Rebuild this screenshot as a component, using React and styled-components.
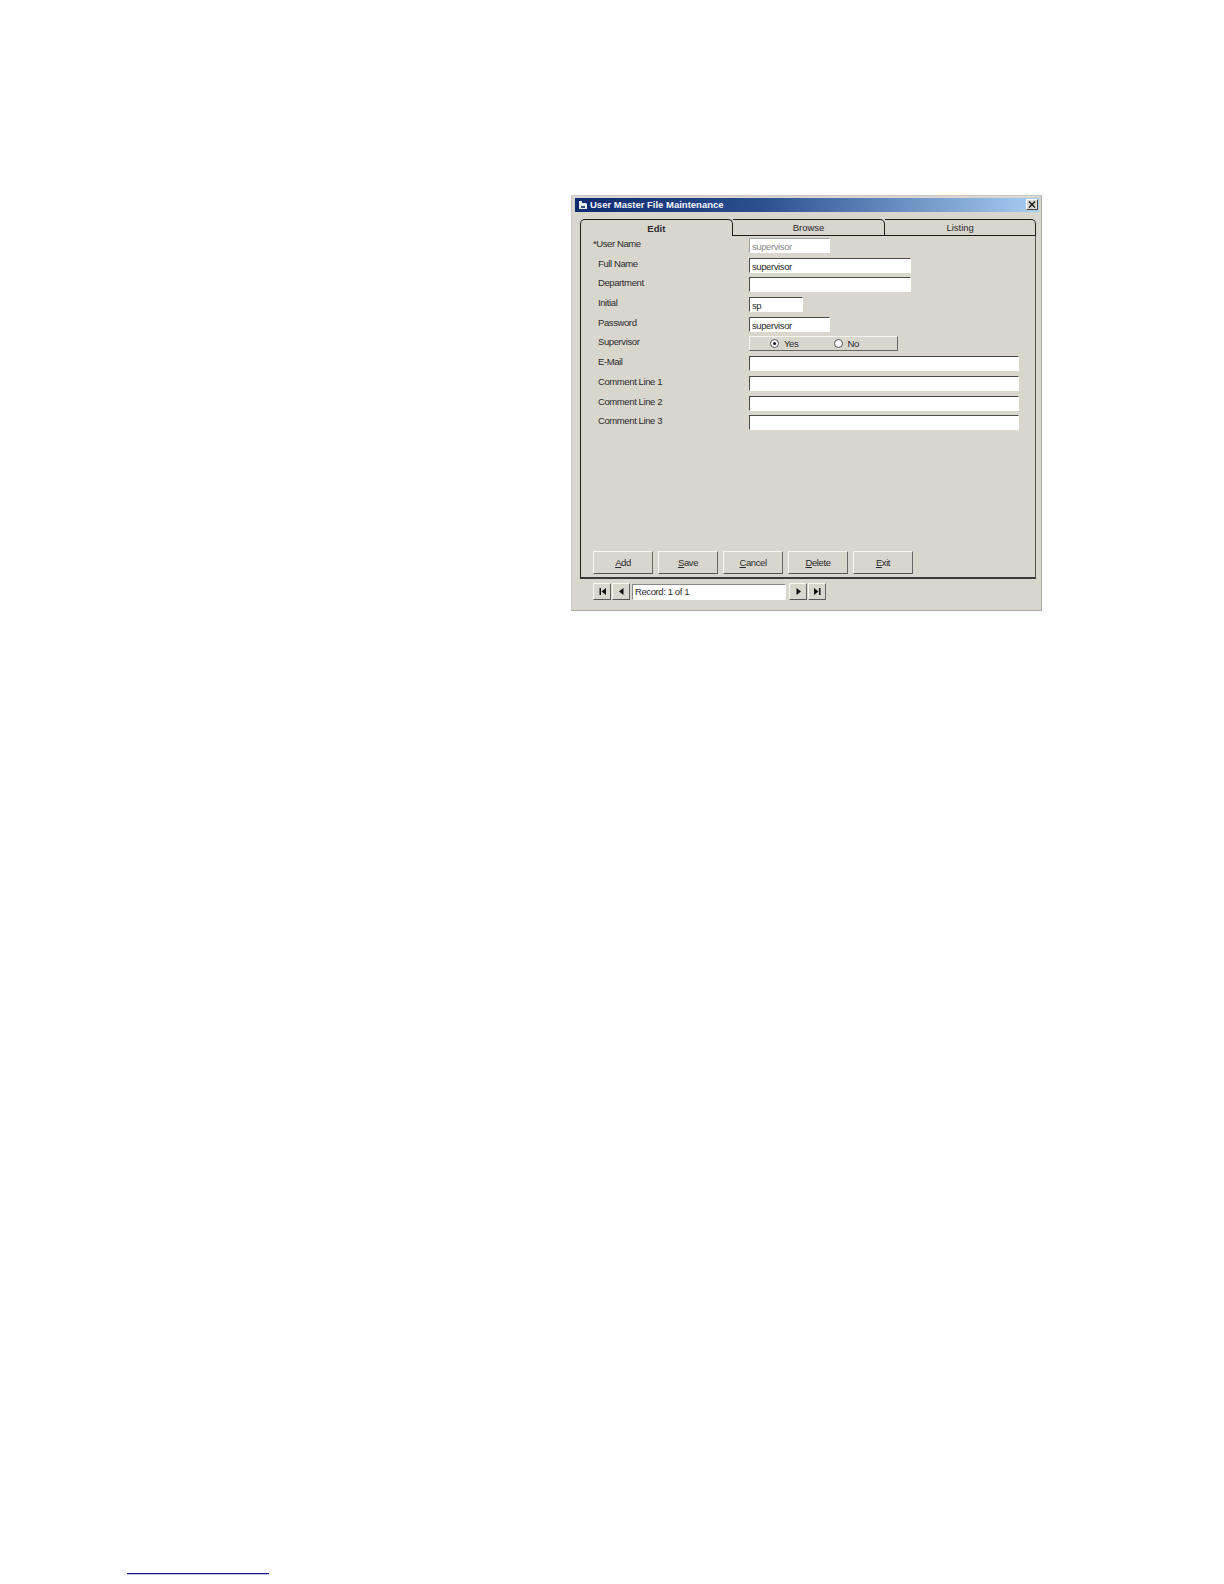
import React from "react";
import styled, { createGlobalStyle } from "styled-components";

const GlobalStyle = createGlobalStyle`
	html, body {
		margin: 0;
		padding: 0;
		background: #fff;
	}
`;

const Page = styled.div`
	box-sizing: border-box;
	height: 1584px;
	padding: 195px 0 9px 127px;
	display: flex;
	flex-direction: column;
	font-family: "Liberation Sans", Arial, sans-serif;
	font-size: 9.5px;
	letter-spacing: -0.4px;
	color: #2a2a2c;
`;

const Window = styled.div`
	box-sizing: border-box;
	width: 471px;
	height: 416px;
	margin-left: 444px;
	padding: 2px 2px 2px 3px;
	background: #d9d6ce;
	border: 1px solid #c9c9c9;
	border-right-color: #a9a9a9;
	border-bottom-color: #a9a9a9;
	display: flex;
	flex-direction: column;
`;

const TitleBar = styled.div`
	height: 14px;
	flex: none;
	display: flex;
	align-items: center;
	padding: 0 1px 1px 3px;
	box-sizing: border-box;
	background: linear-gradient(90deg, #0d2a6e 0%, #2b4f8f 40%, #a9cdf2 100%);
	color: #f4f6fa;
	font-weight: bold;
	font-size: 9.5px;
	letter-spacing: 0;
`;

const TitleIcon = styled.svg`
	width: 10px;
	height: 10px;
	margin-right: 2px;
`;

const CloseButton = styled.div`
	margin-left: auto;
	width: 12px;
	height: 11px;
	display: flex;
	align-items: center;
	justify-content: center;
	background: #d9d6ce;
	border: 1px solid;
	border-color: #fff #444 #444 #fff;
	box-sizing: border-box;
`;

const TabRow = styled.div`
	display: flex;
	margin: 7px 3px 0 5px;
	height: 17px;
	flex: none;
`;

const Tab = styled.div`
	box-sizing: border-box;
	width: ${({ $width }) => $width}px;
	display: flex;
	align-items: center;
	justify-content: center;
	border-top: 1px solid #1c1c1c;
	border-right: 1px solid #1c1c1c;
	border-left: ${({ $active }) => ($active ? "1px solid #1c1c1c" : "none")};
	border-bottom: ${({ $active }) => ($active ? "none" : "1px solid #1c1c1c")};
	border-radius: ${({ $active }) => ($active ? "5px" : "0")} 5px 0 0;
	font-weight: ${({ $active }) => ($active ? "bold" : "normal")};
	font-size: 9.5px;
	letter-spacing: 0;
`;

const Panel = styled.div`
	box-sizing: border-box;
	height: 343px;
	flex: none;
	margin: 0 3px 0 5px;
	padding: 2px 0 3px 12px;
	border: 1px solid #1c1c1c;
	border-top: none;
	border-right-color: #555;
	border-bottom-width: 2px;
	border-bottom-color: #3a3a3a;
	display: flex;
	flex-direction: column;
`;

const Form = styled.div`
	display: flex;
	flex-direction: column;
`;

const Row = styled.div`
	height: 19.7px;
	display: flex;
`;

const Label = styled.div`
	width: 156px;
	padding-left: ${({ $star }) => ($star ? 0 : 5)}px;
	box-sizing: border-box;
	flex: none;
	line-height: 11px;
`;

const Field = styled.div`
	box-sizing: border-box;
	width: ${({ $width }) => $width}px;
	height: 15px;
	padding: 2px 0 0 2px;
	line-height: 12px;
	background: #fff;
	border: 1px solid #fff;
	border-top-color: ${({ $disabled }) => ($disabled ? "#a0a0a0" : "#4a4a4a")};
	border-left-color: ${({ $disabled }) => ($disabled ? "#a0a0a0" : "#4a4a4a")};
	color: ${({ $disabled }) => ($disabled ? "#8a8a8a" : "inherit")};
`;

const RadioGroup = styled.div`
	box-sizing: border-box;
	width: 149px;
	height: 15px;
	display: flex;
	align-items: center;
	padding-left: 20px;
	border: 1px solid;
	border-color: #f4f4f0 #666 #666 #f4f4f0;
`;

const RadioOption = styled.div`
	display: flex;
	align-items: center;
	gap: 5px;
	width: 66px;
`;

const RadioDot = styled.div`
	box-sizing: border-box;
	width: 9px;
	height: 9px;
	border-radius: 50%;
	background: #fff;
	border: 1px solid #555;
	display: flex;
	align-items: center;
	justify-content: center;
	&::after {
		content: "";
		width: 3px;
		height: 3px;
		border-radius: 50%;
		background: ${({ $checked }) => ($checked ? "#111" : "transparent")};
	}
`;

const Actions = styled.div`
	margin-top: auto;
	display: flex;
	gap: 5px;
`;

const Button = styled.div`
	box-sizing: border-box;
	width: 60px;
	height: 23px;
	display: flex;
	align-items: center;
	justify-content: center;
	border: 1px solid;
	border-color: #f7f7f3 #666 #555 #f7f7f3;
`;

const NavBar = styled.div`
	display: flex;
	align-items: center;
	gap: 1px;
	margin: 4px 0 0 18px;
`;

const NavButton = styled.div`
	box-sizing: border-box;
	width: 18px;
	height: 17px;
	display: flex;
	align-items: center;
	justify-content: center;
	border: 1px solid;
	border-color: #f7f7f3 #666 #555 #f7f7f3;
`;

const RecordBox = styled.div`
	box-sizing: border-box;
	width: 154px;
	height: 16px;
	margin: 0 2px 0 1px;
	padding-left: 2px;
	line-height: 14px;
	background: #fff;
	border: 1px solid #fff;
	border-top-color: #8a8a8a;
	border-left-color: #8a8a8a;
`;

const FootRule = styled.div`
	width: 142px;
	height: 2px;
	margin-top: auto;
	background: linear-gradient(#14148c 50%, #c4c4e4 50%);
`;

const rows = [
	{ label: "*User Name", star: true, value: "supervisor", width: 81, disabled: true },
	{ label: "Full Name", value: "supervisor", width: 162 },
	{ label: "Department", value: "", width: 162 },
	{ label: "Initial", value: "sp", width: 54 },
	{ label: "Password", value: "supervisor", width: 81 },
	{ label: "Supervisor", radio: true },
	{ label: "E-Mail", value: "", width: 270 },
	{ label: "Comment Line 1", value: "", width: 270 },
	{ label: "Comment Line 2", value: "", width: 270 },
	{ label: "Comment Line 3", value: "", width: 270 }
];

const NavIcon = ({ d }) => (
	<svg width="9" height="9" viewBox="0 0 9 9">
		<path d={d} fill="#111" />
	</svg>
);

const App = () => {
	return (
		<Page>
			<GlobalStyle />
			<Window>
				<TitleBar>
					<TitleIcon viewBox="0 0 10 10">
						<path d="M1 1h3v2h4l1 1v5H1z" fill="#e8e8e8" />
						<path d="M3 6h4v2H3z" fill="#33507f" />
					</TitleIcon>
					User Master File Maintenance
					<CloseButton>
						<svg width="8" height="7" viewBox="0 0 8 7">
							<path d="M1 0.5l6 6M7 0.5l-6 6" stroke="#111" strokeWidth="1.3" />
						</svg>
					</CloseButton>
				</TitleBar>
				<TabRow>
					<Tab $active $width={153}>Edit</Tab>
					<Tab $width={153}>Browse</Tab>
					<Tab $width={151}>Listing</Tab>
				</TabRow>
				<Panel>
					<Form>
						{rows.map(row => (
							<Row key={row.label}>
								<Label $star={row.star}>{row.label}</Label>
								{row.radio ? (
									<RadioGroup>
										<RadioOption><RadioDot $checked />Yes</RadioOption>
										<RadioOption><RadioDot />No</RadioOption>
									</RadioGroup>
								) : (
									<Field $width={row.width} $disabled={row.disabled}>{row.value}</Field>
								)}
							</Row>
						))}
					</Form>
					<Actions>
						<Button><u>A</u>dd</Button>
						<Button><u>S</u>ave</Button>
						<Button><u>C</u>ancel</Button>
						<Button><u>D</u>elete</Button>
						<Button><u>E</u>xit</Button>
					</Actions>
				</Panel>
				<NavBar>
					<NavButton><NavIcon d="M1.5 1h1.5v7H1.5zM8 1v7L3.5 4.5z" /></NavButton>
					<NavButton><NavIcon d="M6.5 1v7L2 4.5z" /></NavButton>
					<RecordBox>Record: 1 of 1</RecordBox>
					<NavButton><NavIcon d="M2.5 1v7L7 4.5z" /></NavButton>
					<NavButton><NavIcon d="M1 1v7l4.5-3.5zM6 1h1.5v7H6z" /></NavButton>
				</NavBar>
			</Window>
			<FootRule />
		</Page>
	);
};

export default App;
